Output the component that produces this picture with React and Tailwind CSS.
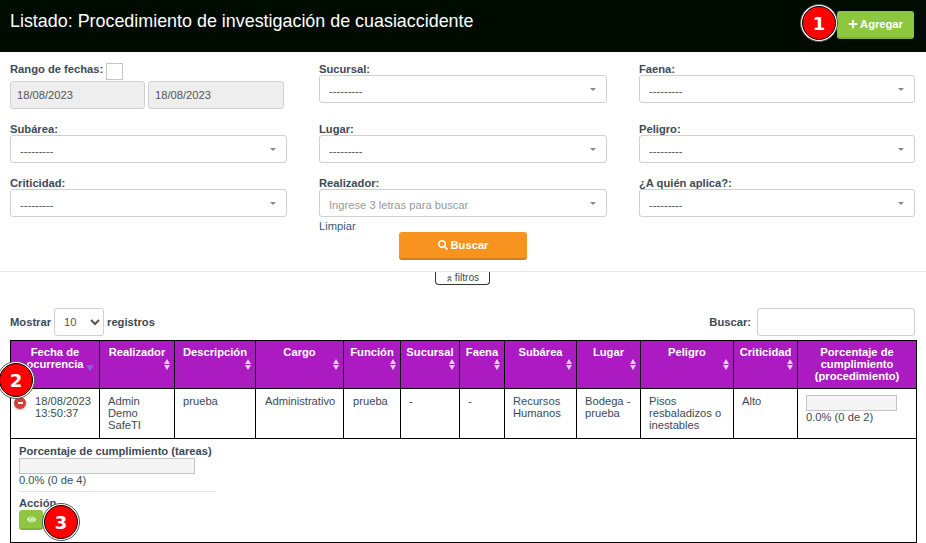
import { FaPlus, FaSearch, FaEye, FaAngleDoubleUp } from "react-icons/fa";

const font = { fontFamily: '"Liberation Sans", Arial, sans-serif' };

const columns = [
  { label: "Fecha de ocurrencia", width: "w-[89px]", active: true },
  { label: "Realizador", width: "w-[75px]" },
  { label: "Descripción", width: "w-[81px]" },
  { label: "Cargo", width: "w-[88px]" },
  { label: "Función", width: "w-[57px]" },
  { label: "Sucursal", width: "w-[59px]" },
  { label: "Faena", width: "w-[45px]" },
  { label: "Subárea", width: "w-[72px]" },
  { label: "Lugar", width: "w-[64px]" },
  { label: "Peligro", width: "w-[93px]" },
  { label: "Criticidad", width: "w-[64px]" },
  { label: "Porcentaje de cumplimiento (procedimiento)", width: "w-[119px]", noSort: true },
];

function Label({ children }) {
  return <label className="block h-[12px] text-[11.2px] leading-[12px] font-bold text-[#3b4a58]">{children}</label>;
}

function Select({ label, placeholder = "---------", className = "" }) {
  return (
    <div className={className}>
      <Label>{label}</Label>
      <div className="flex h-[28px] items-center justify-between rounded-[3px] border border-[#d0d0d0] bg-white pl-[9px] pr-[10px]">
        <span className={`mt-1 text-[11.2px] ${placeholder === "---------" ? "text-[#555]" : "text-[#999]"}`}>{placeholder}</span>
        <span className="h-0 w-0 border-x-[3px] border-t-[3px] border-x-transparent border-t-[#888]" />
      </div>
    </div>
  );
}

function DateInput({ className }) {
  return (
    <div className={`flex h-[28px] items-center rounded-[3px] border border-[#d0d0d0] bg-[#eeeeee] pl-[6px] text-[11.2px] text-[#555] ${className}`}>
      18/08/2023
    </div>
  );
}

function Badge({ n, className }) {
  return (
    <div className={`absolute z-10 flex h-[38px] w-[38px] items-center justify-center rounded-full border border-[#555] bg-white ${className}`}>
      <div className="flex h-[34px] w-[34px] items-center justify-center rounded-full border border-black bg-[#ff0000] font-['DejaVu_Sans',sans-serif] text-[18px] font-bold text-white">
        {n}
      </div>
    </div>
  );
}

function SortIcon({ active }) {
  if (active) {
    return <span className="absolute bottom-[17px] right-[5px] h-0 w-0 border-x-[4px] border-t-[6px] border-x-transparent border-t-[#7b68d6]" />;
  }
  return (
    <span className="absolute bottom-[18px] right-[4px] flex flex-col gap-[1px]">
      <span className="h-0 w-0 border-x-[3.5px] border-b-[5px] border-x-transparent border-b-[#dcd4e0]" />
      <span className="h-0 w-0 border-x-[3.5px] border-t-[5px] border-x-transparent border-t-[#dcd4e0]" />
    </span>
  );
}

function ProgressBar({ className }) {
  return <div className={`h-[16px] border border-[#c4c4c4] bg-[#f5f5f5] ${className}`} />;
}

export default function App() {
  return (
    <div style={font} className="relative h-[543px] w-[926px] overflow-hidden bg-white text-[11.2px] text-[#3b4a58]">
      {/* Header */}
      <header className="relative flex h-[52px] items-start justify-between bg-[#010c01] pl-[10px] pr-[12px]">
        <h1 className="mt-[11px] text-[17.9px] leading-[20px] text-white">
          Listado: Procedimiento de investigación de cuasiaccidente
        </h1>
        <button className="mt-[11px] flex h-[28px] w-[77px] items-center justify-center gap-[2px] rounded-[3px] border-b-2 border-[#7fb13c] bg-[#8dc63f] text-[11.2px] font-bold text-white">
          <FaPlus size={10} />
          Agregar
        </button>
        <Badge n="1" className="left-[800px] top-[4px]" />
      </header>

      {/* Filtros */}
      <section className="grid grid-cols-[277px_288px_276px] gap-x-[32px] pl-[10px] pt-[11px]">
        <div>
          <div className="h-[60px]">
            <div className="flex items-start gap-[3px]">
              <Label>Rango de fechas:</Label>
              <span className="h-[17px] w-[17px] border border-[#c4c4c4] bg-white" />
            </div>
            <div className="flex gap-[3px] pt-[1px]">
              <DateInput className="w-[135px]" />
              <DateInput className="w-[136px]" />
            </div>
          </div>
          <Select label="Subárea:" className="mb-[14px]" />
          <Select label="Criticidad:" />
        </div>
        <div>
          <Select label="Sucursal:" className="mb-[20px]" />
          <Select label="Lugar:" className="mb-[14px]" />
          <Select label="Realizador:" placeholder="Ingrese 3 letras para buscar" />
          <a className="mt-[3px] block h-[12px] leading-[12px] text-[#3b5a74]">Limpiar</a>
        </div>
        <div>
          <Select label="Faena:" className="mb-[20px]" />
          <Select label="Peligro:" className="mb-[14px]" />
          <Select label="¿A quién aplica?:" />
        </div>
      </section>

      <div className="flex justify-center">
        <button className="flex h-[28px] w-[128px] items-center justify-center gap-[3px] rounded-[3px] border-b-2 border-[#d07f18] bg-[#f7931e] text-[11.2px] font-bold text-white">
          <FaSearch size={10} />
          Buscar
        </button>
      </div>

      <div className="mt-[11px] border-t border-[#e5e5e5]">
        <div className="ml-[435px] flex h-[13px] w-[55px] items-center justify-center gap-[2px] rounded-b-[4px] border-x border-b border-[#333] text-[10.2px] leading-none">
          <FaAngleDoubleUp size={7} className="text-[#666]" />
          filtros
        </div>
      </div>

      {/* Controles de la tabla */}
      <div className="mt-[23px] flex h-[28px] items-center justify-between pl-[10px] pr-[11px] font-bold">
        <div className="flex items-center gap-[3px]">
          Mostrar
          <select className="h-[28px] w-[50px] rounded-[3px] border border-[#d0d0d0] bg-white pl-[5px] font-normal text-[#555]">
            <option>10</option>
          </select>
          registros
        </div>
        <div className="flex items-center gap-[6px]">
          Buscar:
          <input className="h-[28px] w-[158px] rounded-[3px] border border-[#d0d0d0] bg-white" />
        </div>
      </div>

      {/* Tabla */}
      <table className="ml-[10px] mt-[4px] w-[906px] table-fixed border-collapse">
        <colgroup>
          {columns.map((c) => (
            <col key={c.label} className={c.width} />
          ))}
        </colgroup>
        <thead>
          <tr className="h-[48px] bg-[#ab1bc1] text-white">
            {columns.map((c) => (
              <th key={c.label} className="relative border border-black px-[4px] pt-[5px] align-top text-[11.2px] leading-[12px] font-bold">
                {c.label}
                {!c.noSort && <SortIcon active={c.active} />}
              </th>
            ))}
          </tr>
        </thead>
        <tbody>
          <tr className="h-[50px] align-top leading-[12px]">
            <td className="border border-black pl-[24px] pt-[6px]">18/08/2023<br />13:50:37</td>
            <td className="border border-black pl-[8px] pt-[6px]">Admin<br />Demo<br />SafeTI</td>
            <td className="border border-black pl-[8px] pt-[6px]">prueba</td>
            <td className="border border-black pl-[9px] pt-[6px]">Administrativo</td>
            <td className="border border-black pl-[9px] pt-[6px]">prueba</td>
            <td className="border border-black pl-[8px] pt-[6px]">-</td>
            <td className="border border-black pl-[8px] pt-[6px]">-</td>
            <td className="border border-black pl-[8px] pt-[6px]">Recursos<br />Humanos</td>
            <td className="border border-black pl-[8px] pt-[6px]">Bodega -<br />prueba</td>
            <td className="border border-black pl-[8px] pt-[6px]">Pisos<br />resbaladizos o<br />inestables</td>
            <td className="border border-black pl-[8px] pt-[6px]">Alto</td>
            <td className="border border-black pl-[8px] pt-[6px]">
              <ProgressBar className="w-[91px]" />
              <div>0.0% (0 de 2)</div>
            </td>
          </tr>
          <tr className="h-[104px] align-top">
            <td colSpan={12} className="border border-black pl-[8px] pt-[6px]">
              <div className="w-[197px]">
                <div className="h-[13px] leading-[13px] font-bold">Porcentaje de cumplimiento (tareas)</div>
                <ProgressBar className="w-[176px]" />
                <div className="h-[12px] leading-[12px]">0.0% (0 de 4)</div>
                <div className="mt-[5px] border-t border-[#e5e5e5] pt-[5px]">
                  <div className="h-[13px] leading-[13px] font-bold">Acción</div>
                  <button className="flex h-[20px] w-[24px] items-center justify-center rounded-[3px] border-b-2 border-[#7fb13c] bg-[#8dc63f] text-[#e8f5d8]">
                    <FaEye size={9} />
                  </button>
                </div>
              </div>
            </td>
          </tr>
        </tbody>
      </table>

      {/* Control de detalle, sobre la fila */}
      <div className="absolute left-[14px] top-[397px] flex h-[12px] w-[12px] items-center justify-center rounded-full bg-[#d43f3a] shadow-[0_1px_2px_rgba(0,0,0,0.3)]">
        <span className="h-[2px] w-[5px] bg-white" />
      </div>

      <Badge n="2" className="left-[-3px] top-[361px]" />
      <Badge n="3" className="left-[42px] top-[503px]" />
    </div>
  );
}
